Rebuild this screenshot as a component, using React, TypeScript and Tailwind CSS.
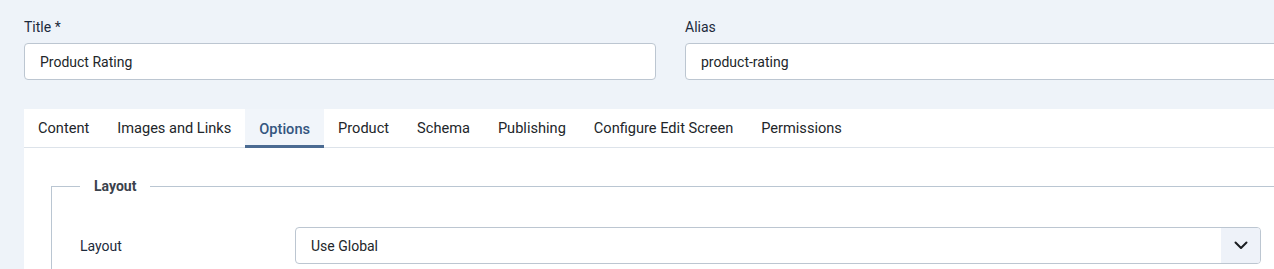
import React from "react";

const tabs = [
  "Content",
  "Images and Links",
  "Options",
  "Product",
  "Schema",
  "Publishing",
  "Configure Edit Screen",
  "Permissions",
];

export default function App() {
  return (
    <div className="w-full h-[269px] overflow-hidden bg-[#eef3f9]">
      <div
        className="w-[1341px] px-[24px] pt-[17px] text-[14px] leading-[20px]"
        style={{ fontFamily: "Roboto, 'Liberation Sans', sans-serif" }}
      >
        <div className="grid grid-cols-2 gap-x-[29px]">
          <div>
            <label className="block mb-[6px] text-[#1c2a3c]">Title *</label>
            <div className="h-[37px] flex items-center bg-white border border-[#bcc6d1] rounded-[4px] px-[15px] text-[#22262a]">
              Product Rating
            </div>
          </div>
          <div>
            <label className="block mb-[6px] text-[#1c2a3c]">Alias</label>
            <div className="h-[37px] flex items-center bg-white border border-[#bcc6d1] rounded-[4px] px-[15px] text-[#22262a]">
              product-rating
            </div>
          </div>
        </div>

        <div className="mt-[29px] bg-white">
          <div className="flex h-[39px] border-b border-[#dde3ea] text-[14.6px]">
            {tabs.map((t) =>
              t === "Options" ? (
                <div
                  key={t}
                  className="px-[14px] h-[39px] flex items-center bg-[#f1f5fa] text-[#34557f] font-medium shadow-[inset_0_-3px_0_#4b6b92]"
                >
                  {t}
                </div>
              ) : (
                <div
                  key={t}
                  className="px-[14px] h-[38px] flex items-center text-[#22262a]"
                >
                  {t}
                </div>
              )
            )}
          </div>

          <div className="pl-[27px] pr-[27px] pt-[28px] pb-[40px]">
            <fieldset className="border border-[#bac6d2] px-[28px] pb-[30px]">
              <legend className="px-[14px] font-bold text-[#3b424c] leading-[20px]">
                Layout
              </legend>
              <div className="flex items-center pt-[31px]">
                <div className="w-[215px] text-[#1c2a3c]">Layout</div>
                <div className="flex-1 h-[37px] flex items-center bg-white border border-[#bcc6d1] rounded-[4px] overflow-hidden">
                  <div className="flex-1 pl-[15px] text-[#22262a]">Use Global</div>
                  <div className="w-[39px] h-full bg-[#eef2f9] flex items-center justify-center">
                    <svg width="14" height="9" viewBox="0 0 14 9" fill="none">
                      <path
                        d="M1.5 1.5L7 7L12.5 1.5"
                        stroke="#1a1d21"
                        strokeWidth="2"
                        strokeLinecap="round"
                        strokeLinejoin="round"
                      />
                    </svg>
                  </div>
                </div>
              </div>
            </fieldset>
          </div>
        </div>
      </div>
    </div>
  );
}
